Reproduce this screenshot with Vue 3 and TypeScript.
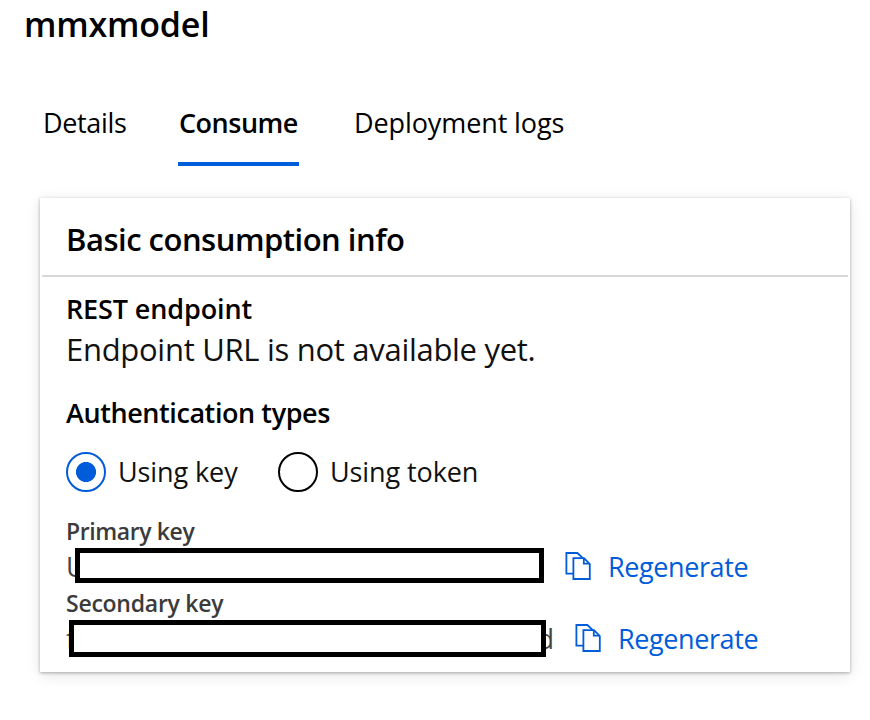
<script setup lang="ts">
import { ref } from 'vue'

interface KeyRow {
  id: string
  label: string
  first: string
  last: string
}

const tabs: string[] = ['Details', 'Consume', 'Deployment logs']
const activeTab = ref('Consume')
const authTypes: string[] = ['Using key', 'Using token']
const auth = ref('Using key')
const keys: KeyRow[] = [
  { id: 'primary', label: 'Primary key', first: 'U', last: '' },
  { id: 'secondary', label: 'Secondary key', first: 'f', last: 'd' },
]
</script>

<template>
  <main class="page">
    <h1 class="title"><span>mmxmodel</span></h1>
    <nav class="tabs">
      <button
        v-for="(tab, i) in tabs"
        :key="tab"
        :class="['tab', `tab-${i}`, { active: tab === activeTab }]"
        @click="activeTab = tab"
      >
        <span>{{ tab }}</span>
      </button>
    </nav>

    <section class="card">
      <h2 class="card-title"><span>Basic consumption info</span></h2>
      <div class="body">
        <h3 class="rest"><span>REST endpoint</span></h3>
        <p class="endpoint"><span>Endpoint URL is not available yet.</span></p>
        <h3 class="auth-title"><span>Authentication types</span></h3>
        <div class="radios">
          <div
            v-for="(type, i) in authTypes"
            :key="type"
            :class="['radio', `radio-${i}`, { checked: type === auth }]"
            @click="auth = type"
          >
            <i class="circle"></i>
            <span>{{ type }}</span>
          </div>
        </div>
        <div v-for="row in keys" :key="row.id" :class="['key', row.id]">
          <div class="key-label"><span>{{ row.label }}</span></div>
          <div class="key-row">
            <div class="value">
              <span>{{ row.first }}</span>
              <span class="last">{{ row.last }}</span>
              <i class="mask"></i>
            </div>
            <svg class="copy" width="26" height="28" viewBox="0 0 26 28" fill="none" stroke="#015cda" stroke-width="1.8">
              <path d="M8 21.6H1.4V1H12.4L17.8 6.2" />
              <path d="M8.4 6.2H19L24.8 12V27H8.4Z" />
              <path d="M18.8 6.2V11.6H24.4" />
            </svg>
            <a class="regen">Regenerate</a>
          </div>
        </div>
      </div>
    </section>
  </main>
</template>

<style>
body {
  margin: 0;
  background: #fff;
}
</style>

<style scoped>
.page {
  box-sizing: border-box;
  width: 870px;
  height: 720px;
  padding: 2px 20px 0 24px;
  overflow: hidden;
  font-family: 'Open Sans', 'Noto Sans', sans-serif;
  font-size: 27px;
  color: #000;
}
h1,
h2,
h3,
p {
  margin: 0;
}
.title {
  font-size: 34px;
  line-height: 44px;
  font-weight: 600;
  letter-spacing: -0.2px;
}
.tabs {
  display: flex;
  margin-top: 57px;
  padding-left: 19px;
  height: 63px;
}
.tab {
  box-sizing: border-box;
  flex: none;
  padding: 0;
  border: 0;
  border-bottom: 4px solid transparent;
  background: none;
  font: inherit;
  line-height: 40px;
  color: #000;
  text-align: left;
  white-space: nowrap;
  display: flex;
  letter-spacing: -0.1px;
}
.tab-0 {
  width: 135px;
  letter-spacing: -0.35px;
}
.tab-1 {
  width: 121px;
  margin-right: 55px;
  padding-left: 1px;
}
.tab.active {
  font-weight: 600;
  letter-spacing: -0.5px;
  border-bottom-color: #015cda;
}
.card {
  box-sizing: border-box;
  width: 810px;
  height: 474px;
  margin: 32px 0 0 16px;
  padding: 0 2px;
  background: #fff;
  box-shadow: 0 1px 3px rgba(0, 0, 0, 0.3), 0 3px 14px rgba(0, 0, 0, 0.11);
}
.card-title {
  height: 60px;
  padding: 17px 0 0 24px;
  border-bottom: 2px solid #d8d8d8;
  font-size: 31px;
  line-height: 48px;
  font-weight: 600;
  letter-spacing: -0.5px;
}
.body {
  padding: 12px 0 0 24px;
}
h3 {
  font-size: 27px;
  line-height: 40px;
  font-weight: 600;
  letter-spacing: -0.42px;
}
.rest {
  letter-spacing: -0.12px;
}
.endpoint {
  margin-top: -1px;
  font-size: 31px;
  line-height: 42px;
  letter-spacing: -0.29px;
  color: #111;
}
.auth-title {
  margin-top: 23px;
}
.radios {
  display: flex;
  margin-top: 19px;
  height: 40px;
}
.radio {
  display: flex;
  gap: 12px;
  line-height: 40px;
  letter-spacing: -0.1px;
  color: #111;
}
.radio-0 {
  width: 212px;
}
.circle {
  box-sizing: border-box;
  width: 40px;
  height: 40px;
  border: 2px solid #000;
  border-radius: 50%;
}
.checked .circle {
  border-color: #015cda;
  background: radial-gradient(circle, #015cda 9.7px, transparent 10.3px);
}
.key {
  height: 72px;
}
.primary {
  margin-top: 23px;
}
.key-label {
  height: 32px;
  font-size: 23px;
  line-height: 32px;
  font-weight: 600;
  letter-spacing: -0.4px;
  color: #3b3b3b;
}
.secondary .key-label {
  letter-spacing: -0.25px;
}
.key-row {
  display: flex;
  height: 40px;
  line-height: 40px;
}
.value {
  position: relative;
  display: flex;
  justify-content: space-between;
  width: 478px;
  margin-right: 21px;
  color: #444;
}
.secondary .value {
  width: 488px;
}
.mask {
  position: absolute;
  box-sizing: border-box;
  top: 1px;
  left: 9px;
  width: 469px;
  height: 35px;
  border: 5px solid #000;
  background: #fff;
}
.secondary .mask {
  left: 3px;
  width: 477px;
  height: 37px;
}
.copy {
  flex: none;
  margin: 5px 17px 0 0;
}
.regen {
  color: #015cda;
  letter-spacing: -0.4px;
}
</style>
